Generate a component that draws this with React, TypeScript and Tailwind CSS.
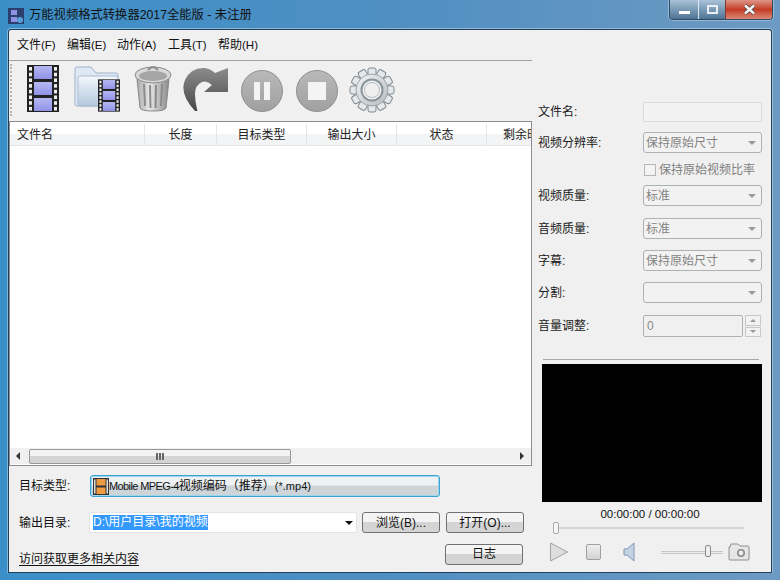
import React from 'react';

const FONT = 'font-["Liberation_Sans","Noto_Sans_CJK_SC",sans-serif]';

const FilmStrip = ({ warm }: { warm?: boolean }) => {
  const cell = warm ? '#e8963a' : '#8f93e6';
  const holes = [0, 1, 2, 3, 4, 5, 6, 7];
  return (
    <g>
      <rect x="0" y="0" width="32" height="47" fill="#222" />
      {holes.map((i) => (
        <g key={i}>
          <rect x="2" y={2 + i * 5.7} width="3" height="3.6" fill="#eee" />
          <rect x="27" y={2 + i * 5.7} width="3" height="3.6" fill="#eee" />
        </g>
      ))}
      <defs>
        <linearGradient id={warm ? 'fw' : 'fc'} x1="0" y1="0" x2="0" y2="1">
          <stop offset="0" stopColor={warm ? '#f6c27c' : '#b5b8f2'} />
          <stop offset="1" stopColor={cell} />
        </linearGradient>
      </defs>
      <rect x="7" y="1" width="18" height="13" fill={`url(#${warm ? 'fw' : 'fc'})`} />
      <rect x="7" y="17" width="18" height="13" fill={`url(#${warm ? 'fw' : 'fc'})`} />
      <rect x="7" y="33" width="18" height="13" fill={`url(#${warm ? 'fw' : 'fc'})`} />
    </g>
  );
};

const FilmIcon = () => (
  <svg width="32" height="47" viewBox="0 0 32 47" className="mt-[4px] ml-[15px] shrink-0">
    <FilmStrip />
  </svg>
);

const FolderIcon = () => (
  <svg width="47" height="46" viewBox="0 0 47 46" className="mt-[5px] ml-[15px] shrink-0">
    <defs>
      <linearGradient id="fold" x1="0" y1="0" x2="0" y2="1">
        <stop offset="0" stopColor="#f4f8fc" />
        <stop offset="1" stopColor="#b4c8de" />
      </linearGradient>
    </defs>
    <path d="M1 3q0-2 2-2h14l5 6h20q2 0 2 2v29q0 2-2 2H3q-2 0-2-2z" fill="#dfe9f4" stroke="#9fb2c8" />
    <path d="M4 12q0-2 2-2h36q2 0 2 2v26q0 2-2 2H6q-2 0-2-2z" fill="url(#fold)" stroke="#a8bbd0" />
    <svg x="24" y="13" width="22" height="33" viewBox="0 0 32 47">
      <FilmStrip />
    </svg>
  </svg>
);

const TrashIcon = () => (
  <svg width="38" height="48" viewBox="0 0 38 48" className="mt-[3px] ml-[13px] shrink-0">
    <defs>
      <linearGradient id="can" x1="0" y1="0" x2="1" y2="0">
        <stop offset="0" stopColor="#aaa" />
        <stop offset="0.4" stopColor="#e8e8e8" />
        <stop offset="1" stopColor="#8a8a8a" />
      </linearGradient>
    </defs>
    <path d="M3 15L6 44q1 3 13 3t13-3l3-29z" fill="url(#can)" stroke="#888" />
    <ellipse cx="19" cy="11" rx="18" ry="8" fill="#d8d8d8" stroke="#8c8c8c" />
    <ellipse cx="19" cy="12" rx="14" ry="5" fill="#a5a5a5" />
    <path d="M14 6q5-6 10 0" fill="none" stroke="#8c8c8c" strokeWidth="2" />
    <path d="M10 20l1 22M16 21l.5 23M22 21l-.5 23M28 20l-1 22" stroke="#8b8b8b" strokeWidth="2" />
  </svg>
);

const RedoIcon = () => (
  <svg width="47" height="45" viewBox="0 0 47 45" className="mt-[5px] ml-[10px] shrink-0">
    <defs>
      <linearGradient id="redo" x1="0" y1="0" x2="0" y2="1">
        <stop offset="0" stopColor="#8c8c8c" />
        <stop offset="1" stopColor="#444" />
      </linearGradient>
    </defs>
    <path d="M13 45Q-3 28 3 14 9 1 23 2q6 1 10 5l13-5v24H22l8-7q-5-5-10-3-7 3-7 12 0 9 3 19z" fill="url(#redo)" />
  </svg>
);

const GrayDisc = ({ children, ml }: { children: React.ReactNode; ml: string }) => (
  <div
    className={`${ml} mt-[9px] flex h-[42px] w-[42px] shrink-0 items-center justify-center gap-[4px] rounded-full border border-[#8f8f8f] bg-gradient-to-b from-[#b9b9b9] to-[#a0a0a0]`}
  >
    {children}
  </div>
);

const GearIcon = () => {
  const teeth = Array.from({ length: 12 }, (_, i) => i * 30);
  return (
    <svg width="46" height="46" viewBox="0 0 46 46" className="mt-[6px] ml-[11px] shrink-0">
      <defs>
        <linearGradient id="gear" x1="0" y1="0" x2="1" y2="1">
          <stop offset="0" stopColor="#f2f4f5" />
          <stop offset="1" stopColor="#b5bcc2" />
        </linearGradient>
      </defs>
      {teeth.map((a) => (
        <rect key={a} x="19" y="1" width="8" height="9" rx="2" fill="#e6e9eb" stroke="#808a91" transform={`rotate(${a} 23 23)`} />
      ))}
      <circle cx="23" cy="23" r="16" fill="url(#gear)" stroke="#9aa3a9" />
      <circle cx="23" cy="23" r="10.5" fill="#f0f0f0" stroke="#8a949b" strokeWidth="2" />
      <circle cx="23" cy="23" r="7.5" fill="#efefef" stroke="#b6bdc2" />
    </svg>
  );
};

const Caret = () => (
  <span className="h-0 w-0 border-x-[4px] border-t-[4px] border-x-transparent border-t-[#9a9a9a]" />
);

const Select = ({ value }: { value?: string }) => (
  <div className="flex h-[21px] w-[119px] items-center justify-between rounded-[3px] border border-[#adb2b5] bg-[#f2f2f2] pl-[2px] pr-[5px] text-[#838383]">
    <span>{value}</span>
    <Caret />
  </div>
);

const Row = ({ label, className, children }: { label: string; className: string; children: React.ReactNode }) => (
  <div className={`flex items-center ${className}`}>
    <span className="w-[105px] shrink-0 text-[#1a1a1a]">{label}</span>
    {children}
  </div>
);

const WinButton = ({ children, className }: { children: React.ReactNode; className?: string }) => (
  <button className={`flex h-[21px] w-[78px] items-center justify-center rounded-[3px] border border-[#707070] bg-gradient-to-b from-[#f4f4f4] from-45% to-[#d4d4d4] to-50% whitespace-nowrap text-[#111] ${className ?? ''}`}>
    {children}
  </button>
);

const columns = [
  { label: '长度', w: 'w-[72px]' },
  { label: '目标类型', w: 'w-[90px]' },
  { label: '输出大小', w: 'w-[90px]' },
  { label: '状态', w: 'w-[90px]' },
];

export default function App() {
  return (
    <div className={`flex h-[580px] w-[780px] flex-col overflow-hidden bg-gradient-to-r from-[#3b8fc9] via-[#4f8fc2] to-[#6d9ac2] text-[12px] ${FONT}`}>
      {/* title bar */}
      <div className="flex h-[29px] shrink-0 items-start">
        <svg width="16" height="16" viewBox="0 0 16 16" className="mt-[8px] ml-[8px] shrink-0">
          <rect width="16" height="16" fill="#2a3f6d" />
          <rect x="3" y="2" width="6" height="5" fill="#8f93e6" />
          <rect x="3" y="9" width="6" height="5" fill="#8f93e6" />
          <circle cx="12" cy="12" r="3" fill="#5aa0d8" />
        </svg>
        <span className="mt-[6px] ml-[5px] text-[12.3px] leading-[18px] text-[#111]">万能视频格式转换器2017全能版 - 未注册</span>
        <div className="ml-auto mr-[7px] flex h-[20px] overflow-hidden rounded-b-[4px] border border-t-0 border-[#2f4a63] shadow-[0_0_0_1px_rgba(255,255,255,0.3)]">
          <div className="flex w-[28px] items-end justify-center bg-gradient-to-b from-[#a9c2d8] to-[#4d7595] pb-[5px]">
            <span className="h-[3px] w-[11px] bg-white" />
          </div>
          <div className="flex w-[27px] items-center justify-center border-l border-[#dce6ee] bg-gradient-to-b from-[#a9c2d8] to-[#4d7595]">
            <span className="h-[9px] w-[11px] border-2 border-[#e8eef3]" />
          </div>
          <div className="flex w-[47px] items-center justify-center border-l border-[#7e3a30] bg-gradient-to-b from-[#dd9487] via-[#c43a22] to-[#d98775]">
            <svg width="13" height="11" viewBox="0 0 13 11">
              <path d="M2 1.5L11 9.5M11 1.5L2 9.5" stroke="#4a4a4a" strokeWidth="4" />
              <path d="M2 1.5L11 9.5M11 1.5L2 9.5" stroke="#f6f6f6" strokeWidth="2.4" />
            </svg>
          </div>
        </div>
      </div>

      {/* client area */}
      <div className="mx-[8px] flex min-h-0 flex-1 rounded-t-[3px] border border-b-0 border-[#20405c] bg-[#f0f0f0] shadow-[0_0_0_1px_rgba(255,255,255,0.35)]">
        <div className="flex w-[523px] shrink-0 flex-col">
          {/* menu */}
          <div className="flex h-[31px] items-center gap-[11px] whitespace-nowrap border-b border-[#a0a0a0] pl-[8px] pt-[1px] text-[#111]">
            <span className="w-[39px]">文件<span className="text-[11.5px]">(F)</span></span>
            <span className="w-[39px]">编辑<span className="text-[11.5px]">(E)</span></span>
            <span className="w-[40px]">动作<span className="text-[11.5px]">(A)</span></span>
            <span className="w-[39px]">工具<span className="text-[11.5px]">(T)</span></span>
            <span className="w-[40px]">帮助<span className="text-[11.5px]">(H)</span></span>
          </div>

          {/* toolbar */}
          <div className="flex h-[60px] shrink-0 items-start pl-[1px]">
            <div className="mt-[3px] h-[52px] w-[2px] border-l-2 border-dotted border-[#b5b5b5]" />
            <FilmIcon />
            <FolderIcon />
            <TrashIcon />
            <RedoIcon />
            <GrayDisc ml="ml-[12px]">
              <span className="h-[18px] w-[6px] bg-[#f4f4f4]" />
              <span className="h-[18px] w-[6px] bg-[#f4f4f4]" />
            </GrayDisc>
            <GrayDisc ml="ml-[13px]">
              <span className="h-[18px] w-[18px] bg-[#f4f4f4]" />
            </GrayDisc>
            <GearIcon />
          </div>

          {/* file list */}
          <div className="flex h-[345px] shrink-0 flex-col overflow-hidden border border-[#8c8c92] bg-white">
            <div className="flex h-[24px] shrink-0 items-center whitespace-nowrap border-b border-[#e3e5e7] bg-gradient-to-b from-white from-50% to-[#f3f4f6] to-50% pt-[2px] text-[#222]">
              <span className="w-[135px] shrink-0 border-r border-[#e3e5e7] pl-[7px] leading-[22px]">文件名</span>
              {columns.map((c) => (
                <span key={c.label} className={`${c.w} shrink-0 border-r border-[#e3e5e7] text-center leading-[22px]`}>
                  {c.label}
                </span>
              ))}
              <span className="pl-[16px]">剩余时间</span>
            </div>
            <div className="flex-1" />
            <div className="mb-[1px] flex h-[16px] shrink-0 items-center bg-[#f0f0f0]">
              <span className="ml-[6px] h-0 w-0 border-y-[4px] border-r-[4px] border-y-transparent border-r-[#333]" />
              <div className="ml-[9px] flex h-[15px] w-[262px] items-center justify-center rounded-[2px] border border-[#979797] bg-gradient-to-b from-[#f3f3f3] from-45% to-[#d4d4d4] to-50%">
                <span className="h-[7px] w-[8px] border-x-2 border-[#666] px-[1px]">
                  <span className="block h-full w-[2px] bg-[#666]" />
                </span>
              </div>
              <span className="ml-auto mr-[7px] h-0 w-0 border-y-[4px] border-l-[4px] border-y-transparent border-l-[#333]" />
            </div>
          </div>

          {/* target and output */}
          <div className="mt-[9px] flex items-center pl-[10px]">
            <span className="w-[71px] shrink-0 text-[#111]">目标类型:</span>
            <div className="flex h-[22px] w-[350px] items-center rounded-[3px] border border-[#3aa3d6] bg-gradient-to-b from-[#eef1f3] from-45% to-[#cdd5d9] to-50% pl-[2px] text-[#111] shadow-[inset_0_0_0_1px_#9fd4ec]">
              <svg width="16" height="17" viewBox="0 0 32 34" className="shrink-0">
                <rect width="32" height="34" fill="#333" />
                <rect x="7" y="2" width="18" height="13" fill="#ee9c42" />
                <rect x="7" y="19" width="18" height="13" fill="#ee9c42" />
                <rect x="2" y="3" width="3" height="28" fill="#ddd" />
                <rect x="27" y="3" width="3" height="28" fill="#ddd" />
              </svg>
              <span className="whitespace-nowrap [text-spacing-trim:space-all]">
                <span className="text-[11px] tracking-[-0.6px]">Mobile MPEG-4</span>视频编码（推荐）<span className="text-[11px]">(*.mp4)</span>
              </span>
            </div>
          </div>

          <div className="mt-[15px] flex items-center pl-[10px]">
            <span className="w-[70px] shrink-0 text-[#111]">输出目录:</span>
            <div className="flex h-[21px] w-[268px] items-center rounded-[2px] border border-[#e4e4e4] bg-white pl-[3px] pr-[3px]">
              <span className="bg-[#3399ff] leading-[15px] whitespace-nowrap text-white">D:\用户目录\我的视频</span>
              <span className="ml-auto h-0 w-0 border-x-[4px] border-t-[4px] border-x-transparent border-t-[#111]" />
            </div>
            <WinButton className="ml-[5px]">浏览(B)...</WinButton>
            <WinButton className="ml-[6px]">打开(O)...</WinButton>
          </div>

          <div className="mt-[7px] flex items-center pl-[10px]">
            <a className="mt-[10px] text-[#111] underline underline-offset-2">访问获取更多相关内容</a>
            <WinButton className="ml-auto mr-[9px]">日志</WinButton>
          </div>
        </div>

        {/* right panel */}
        <div className="flex flex-1 flex-col pl-[6px]">
          <Row label="文件名:" className="mt-[72px]">
            <div className="h-[20px] w-[119px] rounded-[2px] border border-[#dcdcdc] bg-[#f2f2f2]" />
          </Row>
          <Row label="视频分辨率:" className="mt-[10px]">
            <Select value="保持原始尺寸" />
          </Row>
          <label className="mt-[8px] ml-[106px] flex items-center gap-[3px] text-[#7f7f7f]">
            <span className="h-[12px] w-[12px] border border-[#b5b5b5] bg-[#f4f4f4]" />
            保持原始视频比率
          </label>
          <Row label="视频质量:" className="mt-[6px]">
            <Select value="标准" />
          </Row>
          <Row label="音频质量:" className="mt-[12px]">
            <Select value="标准" />
          </Row>
          <Row label="字幕:" className="mt-[11px]">
            <Select value="保持原始尺寸" />
          </Row>
          <Row label="分割:" className="mt-[11px]">
            <Select />
          </Row>
          <Row label="音量调整:" className="mt-[12px]">
            <div className="flex h-[22px] w-[100px] items-center rounded-[2px] border border-[#adb2b5] bg-[#f0f0f0] pl-[3px] text-[#8a8a8a]">0</div>
            <div className="ml-[2px] flex h-[22px] w-[16px] flex-col gap-[1px]">
              <span className="flex flex-1 items-center justify-center border border-[#c8c8c8] bg-[#f2f2f2]">
                <span className="h-0 w-0 border-x-[3px] border-b-[3px] border-x-transparent border-b-[#999]" />
              </span>
              <span className="flex flex-1 items-center justify-center border border-[#c8c8c8] bg-[#f2f2f2]">
                <span className="h-0 w-0 border-x-[3px] border-t-[3px] border-x-transparent border-t-[#999]" />
              </span>
            </div>
          </Row>

          <div className="mt-[22px] ml-[5px] h-[1px] w-[216px] bg-[#a8a8a8]" />
          <div className="mt-[4px] ml-[4px] h-[138px] w-[220px] shrink-0 bg-black" />
          <div className="mt-[4px] ml-[4px] w-[216px] text-center text-[11.5px] leading-[16px] text-[#111]">00:00:00 / 00:00:00</div>

          <div className="relative ml-[15px] flex h-[12px] w-[191px] items-center">
            <div className="h-[2px] w-full bg-[#d4d4d4]" />
            <span className="absolute left-[0px] top-0 h-[12px] w-[6px] rounded-[2px] border border-[#aaa] bg-[#f4f4f4]" />
          </div>

          <div className="mt-[8px] ml-[11px] flex items-center">
            <svg width="20" height="20" viewBox="0 0 20 20" className="shrink-0">
              <path d="M1.5 1L18.5 10 1.5 19z" fill="#dedede" stroke="#a2a2a2" />
            </svg>
            <span className="ml-[17px] h-[16px] w-[15px] rounded-[2px] border border-[#a0a0a0] bg-gradient-to-b from-[#efefef] to-[#d2d2d2]" />
            <svg width="12" height="20" viewBox="0 0 12 20" className="ml-[22px] shrink-0">
              <path d="M1 7h3l7-6v18l-7-6H1z" fill="#c4d2e4" stroke="#7d96b8" />
            </svg>
            <div className="relative ml-[26px] flex h-[14px] w-[62px] items-center">
              <div className="h-[3px] w-full border-y border-[#c6c6c6] bg-[#ededed]" />
              <span className="absolute left-[44px] top-0 h-[12px] w-[6px] rounded-[2px] border border-[#888] bg-[#eee]" />
            </div>
            <svg width="22" height="18" viewBox="0 0 22 18" className="ml-[5px] shrink-0">
              <path d="M1 4h1l1-3h7l2 2h8q1 0 1 1v12q0 1-1 1H2q-1 0-1-1z" fill="#e6e6e6" stroke="#8e8e8e" />
              <circle cx="13" cy="10" r="3.2" fill="#ececec" stroke="#8a8a8a" strokeWidth="1.6" />
            </svg>
          </div>
        </div>
      </div>
      <div className="mx-[8px] h-[8px] shrink-0 border-t border-[#20405c]" />
    </div>
  );
}
